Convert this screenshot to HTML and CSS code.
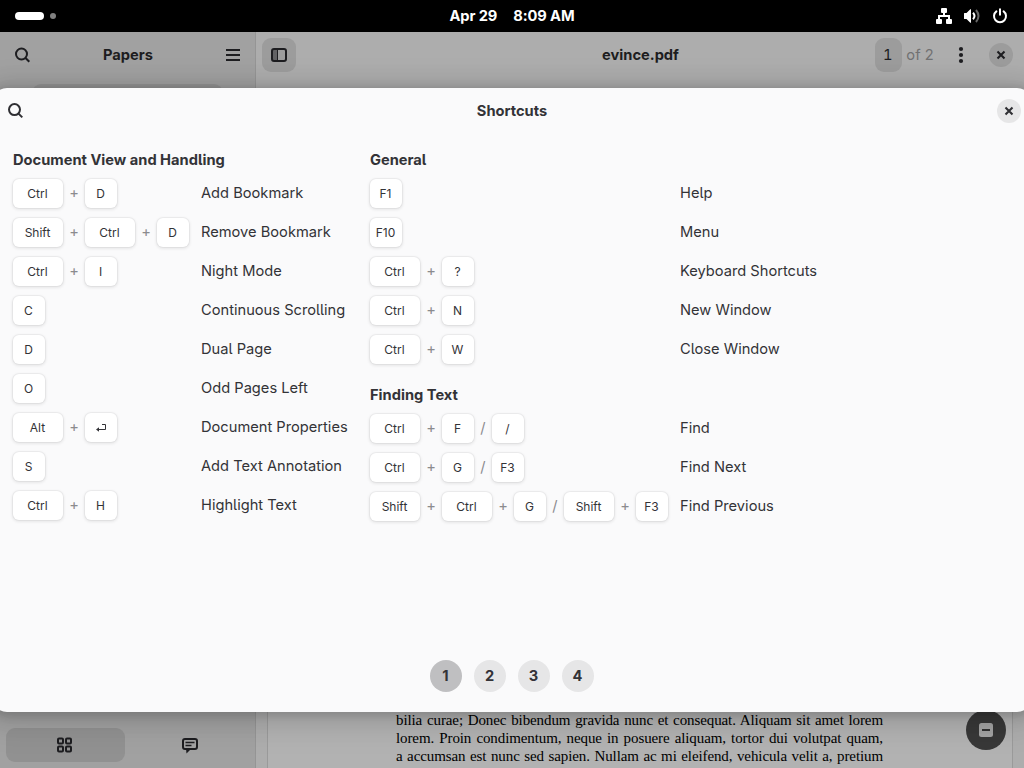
FILE: index.html
```
<!DOCTYPE html>
<html lang="en">
<head>
<meta charset="utf-8">
<title>Shortcuts</title>
<link rel="stylesheet" href="styles.css">
</head>
<body>
<div class="desktop">
  <header class="topbar">
    <div class="workspaces"><span class="pill"></span><span class="dot"></span></div>
    <div class="clock"><span class="date">Apr 29</span><span class="time">8:09 AM</span></div>
    <div class="status">
      <svg width="16" height="16" viewBox="0 0 16 16" fill="#fff"><rect x="5" y="0" width="6" height="5" rx="1"/><path d="M7 4h2v3h5v4h-2V9H4v2H2V7h5z"/><rect x="0" y="11" width="6" height="5" rx="1"/><rect x="10" y="11" width="6" height="5" rx="1"/></svg>
      <svg width="16" height="16" viewBox="0 0 16 16"><path fill="#fff" d="M0 5.5q0-.5.5-.5H2.500L6.300 1.200H7v13.600h-.7L2.500 11H.5Q0 11 0 10.500z"/><path d="M9 4.800q3 3.200 0 6.400" fill="none" stroke="#fff" stroke-width="2"/><path d="M12 2q5 6 0 12" fill="none" stroke="#666" stroke-width="2"/></svg>
      <svg width="16" height="16" viewBox="0 0 16 16" fill="none" stroke="#fff" stroke-width="2" stroke-linecap="round"><path d="M4.400 3.400a6 6 0 1 0 7.200 0M8 1.200v5.600"/></svg>
    </div>
  </header>
  <div class="window">
    <aside class="sidebar">
      <div class="bar side-head">
        <svg class="icon" width="16" height="16" viewBox="0 0 16 16"><circle cx="7.500" cy="7" r="5.500"/><path d="M11.300 10.800l4 4"/></svg>
        <b>Papers</b>
        <svg class="icon" width="16" height="16" viewBox="0 0 16 16"><path d="M1 3h14M1 8h14M1 13h14"/></svg>
      </div>
      <div class="thumb"></div>
      <div class="tabs">
        <div class="tab active"><svg class="icon" width="16" height="16" viewBox="0 0 16 16"><rect x="1" y="1.500" width="5" height="5" rx="1"/><rect x="9" y="1.500" width="5" height="5" rx="1"/><rect x="1" y="9.500" width="5" height="5" rx="1"/><rect x="9" y="9.500" width="5" height="5" rx="1"/></svg></div>
        <div class="tab"><svg class="icon" width="16" height="17" viewBox="0 0 16 17"><rect x="1" y="2" width="14" height="10" rx="2"/><path d="M3.500 5.500h9M3.500 8.500h6" stroke-width="1.600"/><path d="M4 12h5l-4.500 4.500z" fill="#1d1d20" stroke="none"/></svg></div>
      </div>
    </aside>
    <main class="viewer">
      <div class="bar view-head">
        <div class="toggle"><svg class="icon" width="16" height="16" viewBox="0 0 16 16"><path d="M2 2h5v12H2z" fill="#626264" stroke="none"/><rect x="1" y="2" width="14" height="12" rx="2"/><path d="M6.500 2v12" stroke-width="1"/></svg></div>
        <b class="doc-title">evince.pdf</b>
        <div class="view-actions">
          <span class="page-no">1</span><span class="page-total">of 2</span>
          <svg class="more" width="6" height="18" viewBox="0 0 6 18" fill="#1d1d20"><circle cx="3" cy="3" r="2.100"/><circle cx="3" cy="9" r="2.100"/><circle cx="3" cy="15" r="2.100"/></svg>
          <span class="close"><svg width="10" height="10" viewBox="0 0 10 10"><path d="M1.500 1.500l7 7M8.500 1.500l-7 7"/></svg></span>
        </div>
      </div>
      <article class="page">
        <p>bilia curae; Donec bibendum gravida nunc et consequat. Aliquam sit amet lorem</p>
        <p>lorem. Proin condimentum, neque in posuere aliquam, tortor dui volutpat quam,</p>
        <p>a accumsan est nunc sed sapien. Nullam ac mi eleifend, vehicula velit a, pretium</p>
      </article>
      <div class="zoom-out"><svg width="14" height="14" viewBox="0 0 14 14"><rect width="14" height="14" rx="2.500" fill="#a3a3a3"/><path d="M3 7h8" stroke="#323232" stroke-width="2"/></svg></div>
    </main>
  </div>
  <section class="dialog">
    <div class="dialog-head">
      <svg class="icon" width="16" height="16" viewBox="0 0 16 16"><circle cx="7.500" cy="6.600" r="5.500"/><path d="M11.300 10.400l4 4"/></svg>
      <b>Shortcuts</b>
      <span class="close"><svg width="10" height="10" viewBox="0 0 10 10"><path d="M1.500 1.500l7 7M8.500 1.500l-7 7"/></svg></span>
    </div>
    <div class="columns">
      <div class="column">
        <section class="group left">
          <h2>Document View and Handling</h2>
          <div class="row"><div class="keys"><kbd class="wide">Ctrl</kbd><i>+</i><kbd>D</kbd></div><span>Add Bookmark</span></div>
          <div class="row"><div class="keys"><kbd class="wide">Shift</kbd><i>+</i><kbd class="wide">Ctrl</kbd><i>+</i><kbd>D</kbd></div><span>Remove Bookmark</span></div>
          <div class="row"><div class="keys"><kbd class="wide">Ctrl</kbd><i>+</i><kbd>I</kbd></div><span>Night Mode</span></div>
          <div class="row"><div class="keys"><kbd>C</kbd></div><span>Continuous Scrolling</span></div>
          <div class="row"><div class="keys"><kbd>D</kbd></div><span>Dual Page</span></div>
          <div class="row"><div class="keys"><kbd>O</kbd></div><span>Odd Pages Left</span></div>
          <div class="row"><div class="keys"><kbd class="wide">Alt</kbd><i>+</i><kbd><svg width="12" height="10" viewBox="0 0 12 10"><path d="M7 1.500h3.500v5H2" fill="none" stroke="#333337"/><path d="M4 4.200v4.600L1 6.500z" fill="#333337"/></svg></kbd></div><span>Document Properties</span></div>
          <div class="row"><div class="keys"><kbd>S</kbd></div><span>Add Text Annotation</span></div>
          <div class="row"><div class="keys"><kbd class="wide">Ctrl</kbd><i>+</i><kbd>H</kbd></div><span>Highlight Text</span></div>
        </section>
      </div>
      <div class="column">
        <section class="group right">
          <h2>General</h2>
          <div class="row"><div class="keys"><kbd>F1</kbd></div><span>Help</span></div>
          <div class="row"><div class="keys"><kbd>F10</kbd></div><span>Menu</span></div>
          <div class="row"><div class="keys"><kbd class="wide">Ctrl</kbd><i>+</i><kbd>?</kbd></div><span>Keyboard Shortcuts</span></div>
          <div class="row"><div class="keys"><kbd class="wide">Ctrl</kbd><i>+</i><kbd>N</kbd></div><span>New Window</span></div>
          <div class="row"><div class="keys"><kbd class="wide">Ctrl</kbd><i>+</i><kbd>W</kbd></div><span>Close Window</span></div>
        </section>
        <section class="group right">
          <h2>Finding Text</h2>
          <div class="row"><div class="keys"><kbd class="wide">Ctrl</kbd><i>+</i><kbd>F</kbd><i class="or">/</i><kbd>/</kbd></div><span>Find</span></div>
          <div class="row"><div class="keys"><kbd class="wide">Ctrl</kbd><i>+</i><kbd>G</kbd><i class="or">/</i><kbd>F3</kbd></div><span>Find Next</span></div>
          <div class="row"><div class="keys"><kbd class="wide">Shift</kbd><i>+</i><kbd class="wide">Ctrl</kbd><i>+</i><kbd>G</kbd><i class="or">/</i><kbd class="wide">Shift</kbd><i>+</i><kbd>F3</kbd></div><span>Find Previous</span></div>
        </section>
      </div>
    </div>
    <nav class="pager"><span class="current">1</span><span>2</span><span>3</span><span>4</span></nav>
  </section>
</div>
</body>
</html>
```
FILE: styles.css
```
* { box-sizing: border-box; }
body { margin: 0; }
b { font-weight: 700; }
.desktop {
  position: relative;
  width: 1024px;
  height: 768px;
  overflow: hidden;
  display: flex;
  flex-direction: column;
  font: 14.667px/20px Inter, sans-serif;
  font-feature-settings: "cv05";
  color: #333337;
}
.icon { display: block; fill: none; stroke: #1d1d20; stroke-width: 2; }

.topbar {
  height: 32px;
  flex: none;
  background: #000;
  color: #fff;
  display: grid;
  grid-template-columns: 1fr auto 1fr;
  align-items: center;
  font-weight: 700;
  position: relative;
  z-index: 2;
}
.workspaces { display: flex; align-items: center; gap: 6px; padding-left: 15px; }
.pill { width: 29px; height: 8px; border-radius: 4px; background: #fff; }
.dot { width: 6px; height: 6px; border-radius: 50%; background: #808080; }
.clock { display: flex; gap: 16px; letter-spacing: -.1px; }
.status { display: flex; justify-content: flex-end; gap: 12px; padding-right: 16px; }
.status svg { display: block; }

.window { flex: 1; display: flex; color: #1d1d20; background: #adadad; }
.sidebar {
  width: 256px;
  display: flex;
  flex-direction: column;
  background: #a1a1a1;
  border-right: 1px solid #959595;
}
.bar { height: 46px; flex: none; align-items: center; }
.side-head { display: flex; justify-content: space-between; padding: 0 14px; }
.side-head b { padding-left: 1px; }
.thumb { height: 30px; margin: 6px 32px 0; border-radius: 9px; background: #949494; }
.tabs { display: flex; gap: 6px; margin-top: auto; padding: 0 6px 6px; }
.tab { flex: 1; height: 34px; border-radius: 9px; display: flex; align-items: center; justify-content: center; }
.tab.active { background: #919191; }
.viewer { flex: 1; display: flex; flex-direction: column; position: relative; }
.view-head { display: grid; grid-template-columns: 1fr auto 1fr; padding: 0 6px; }
.doc-title { padding-left: 1px; }
.toggle { width: 34px; height: 34px; border-radius: 9px; background: #9c9c9c; display: grid; place-items: center; }
.view-actions { display: flex; justify-content: flex-end; align-items: center; padding-right: 5px; font-feature-settings: "cv05", "tnum"; }
.page-no { width: 27px; height: 34px; padding-right: 2px; border-radius: 9px; background: #9c9c9c; line-height: 34px; text-align: center; }
.page-total { margin-left: 4px; color: #717172; }
.more { margin: 0 25px 0 24px; }
.close { width: 24px; height: 24px; border-radius: 50%; display: grid; place-items: center; background: #9c9c9c; }
.close path { stroke: #1d1d20; stroke-width: 2.100; fill: none; }
.page {
  margin: auto 11px 0 11px;
  height: 70px;
  padding: 13px 129px 0 128px;
  background: #b2b2b2;
  border: solid #9a9a9a;
  border-width: 0 1px;
  font: 15px/18px "Liberation Serif", serif;
  color: #000;
}
.page p { margin: 0; text-align-last: justify; white-space: nowrap; letter-spacing: -.1px; }
.zoom-out {
  position: absolute;
  right: 18px;
  bottom: 18px;
  width: 40px;
  height: 40px;
  border-radius: 50%;
  background: #383838;
  display: grid;
  place-items: center;
}

.dialog {
  position: absolute;
  left: -8px;
  top: 88px;
  width: 1040px;
  height: 624px;
  border-radius: 15px;
  background: #fafafb;
  box-shadow: 0 2px 8px 2px rgba(0,0,0,.13), 0 3px 20px 10px rgba(0,0,0,.09), 0 6px 32px 16px rgba(0,0,0,.04);
  display: flex;
  flex-direction: column;
}
.dialog-head { height: 46px; padding: 0 11px 0 15px; display: grid; grid-template-columns: 1fr auto 1fr; align-items: center; }
.dialog-head b { margin-right: 4px; }
.dialog-head .icon { stroke: #2f2f33; }
.dialog-head .close { justify-self: end; background: #e6e6e7; }
.dialog-head .close path { stroke: #2f2f33; }
.columns { display: flex; padding: 16px 0 0 21px; }
.column { display: flex; flex-direction: column; gap: 21px; width: 357px; }
.group { display: flex; flex-direction: column; gap: 10px; }
.group h2 { margin: 0 0 -1px; font-size: 14.667px; line-height: 20px; font-weight: 700; }
.row { display: grid; column-gap: 12px; height: 29px; align-items: center; white-space: nowrap; }
.left .row { grid-template-columns: 176px 1fr; }
.right .row { grid-template-columns: 298px 1fr; }
.row > span { padding-bottom: 1px; }
.keys { display: flex; align-items: center; }
kbd {
  width: 32px;
  height: 29px;
  padding-right: 1px;
  border-radius: 6px;
  background: #fff;
  box-shadow: 0 0 0 1px rgba(0,0,6,.035), 0 1px 3px 1px rgba(0,0,6,.08);
  font: 12px/29px Inter, sans-serif;
  display: flex;
  align-items: center;
  justify-content: center;
}
kbd.wide { width: 50px; }
.keys i { width: 22px; text-align: center; font-style: normal; color: #8b8b8e; padding-bottom: 1px; }
.keys i.or { width: 18px; }
.pager { display: flex; justify-content: center; gap: 12px; margin-top: auto; margin-bottom: 20px; }
.pager span { width: 32px; height: 32px; padding-right: 1px; border-radius: 50%; background: #e6e6e7; font-weight: 700; line-height: 32px; text-align: center; }
.pager .current { background: #bfbfc1; }
```
